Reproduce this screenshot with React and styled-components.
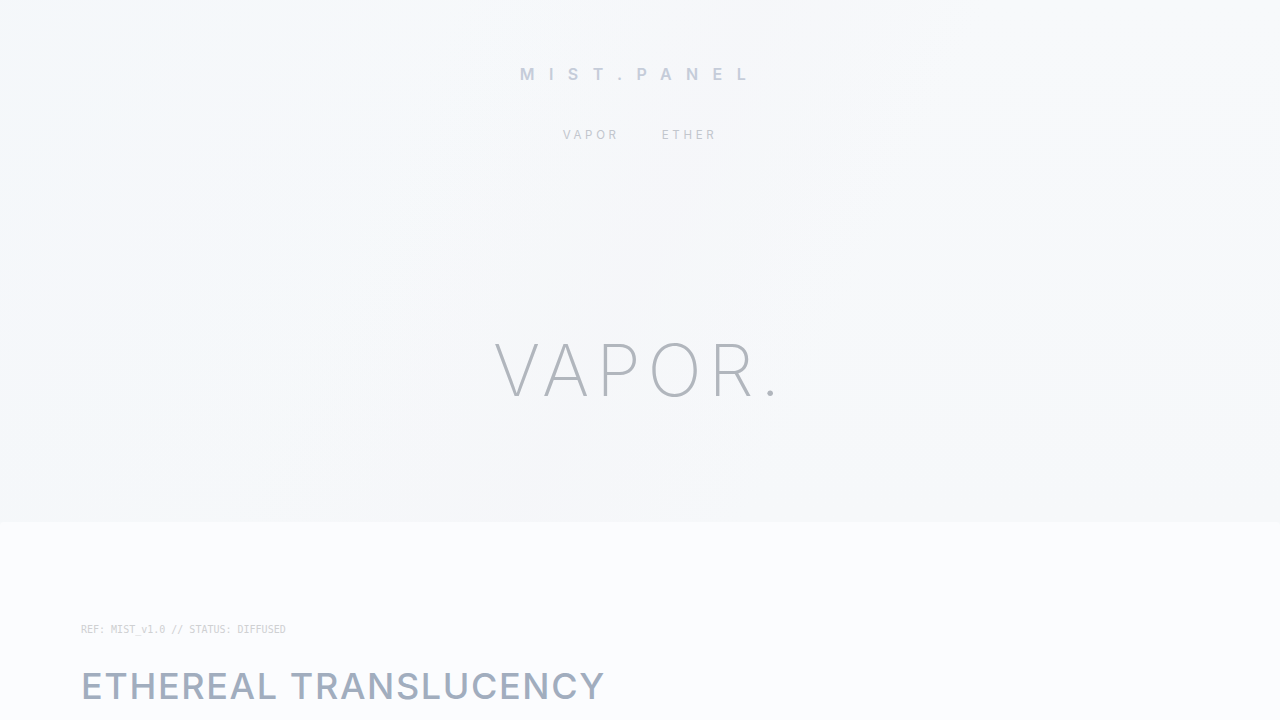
import React from "react";
import styled, { createGlobalStyle } from "styled-components";

const Global = createGlobalStyle`
  html, body { margin: 0; padding: 0; }
  body {
    background: #f7f9fb;
    font-family: Inter, "Noto Sans", sans-serif;
    overflow: hidden;
  }
  * { box-sizing: border-box; }
`;

const Page = styled.div`
  width: 1280px;
  min-height: 720px;
  display: flex;
  flex-direction: column;
`;

const Hero = styled.section`
  height: 522px;
  display: flex;
  flex-direction: column;
  align-items: center;
  background:
    linear-gradient(125deg, rgba(244, 247, 250, 0.8) 0%, rgba(244, 247, 250, 0) 45%),
    linear-gradient(115deg, rgba(245, 246, 249, 0) 30%, rgba(245, 246, 249, 0.7) 50%, rgba(245, 246, 249, 0) 65%),
    linear-gradient(180deg, #f7f9fb 0%, #f6f8fa 100%);
`;

const Header = styled.header`
  padding-top: 64px;
  display: flex;
  flex-direction: column;
  align-items: center;
  gap: 43px;
`;

const Logo = styled.div`
  font-size: 16px;
  line-height: 20px;
  font-weight: 600;
  letter-spacing: 0.9em;
  color: #c5ccd9;
`;

const Nav = styled.nav`
  display: flex;
  gap: 42px;
`;

const NavLink = styled.a`
  font-size: 11.5px;
  line-height: 16px;
  font-weight: 400;
  letter-spacing: 0.32em;
  color: #c2c6cd;
  text-decoration: none;
`;

const Title = styled.h1`
  margin: 187px 0 0;
  font-size: 72px;
  line-height: 80px;
  font-weight: 200;
  letter-spacing: 0.095em;
  color: #b1b6bd;
`;

const Content = styled.section`
  flex: 1;
  background: #fbfcfe;
  border-radius: 4px 4px 0 0;
  padding: 102px 81px 0;
  display: flex;
  flex-direction: column;
  gap: 28px;
`;

const Meta = styled.div`
  font-family: "DejaVu Sans Mono", "Liberation Mono", monospace;
  font-size: 10px;
  line-height: 12px;
  color: #cfd0d2;
`;

const Heading = styled.h2`
  margin: 0;
  font-size: 36px;
  line-height: 44px;
  font-weight: 500;
  letter-spacing: 0.045em;
  color: #a1adbe;
`;

export default function App() {
  return (
    <Page>
      <Global />
      <Hero>
        <Header>
          <Logo>MIST.PANEL</Logo>
          <Nav>
            <NavLink href="#">VAPOR</NavLink>
            <NavLink href="#">ETHER</NavLink>
          </Nav>
        </Header>
        <Title>VAPOR.</Title>
      </Hero>
      <Content>
        <Meta>REF: MIST_v1.0 // STATUS: DIFFUSED</Meta>
        <Heading>ETHEREAL TRANSLUCENCY</Heading>
      </Content>
    </Page>
  );
}
